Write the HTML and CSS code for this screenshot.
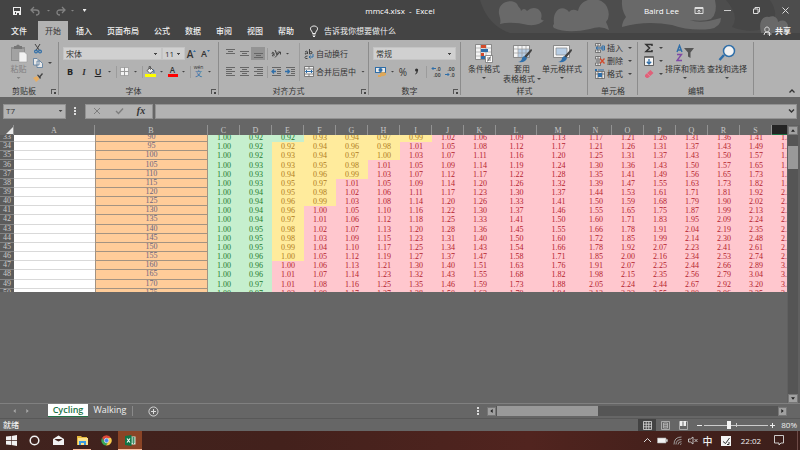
FILE: index.html
```html
<!DOCTYPE html>
<html lang="zh-CN">
<head>
<meta charset="utf-8">
<title>mmc4.xlsx - Excel</title>
<link rel="stylesheet" href="styles.css">
</head>
<body>
<header class="top">
  <svg class="clouds" width="330" height="33" viewBox="0 0 330 33" aria-hidden="true">
    <path class="haze" d="M10 0H330V33H40Q18 26 10 0Z"/>
    <path class="dark" d="M256 0H300Q312 18 296 28Q280 34 262 27Q270 16 256 0Z"/>
    <path d="M30 24C31 20 30 18 29 14C27 0 46-2 48 6Q51 9 51 11Q54 7 57 11Q62 6 68 9Q73 13 71 19Q72 21 74 20Q70 26 58 25Q42 21 30 24Z"/>
    <path d="M84 24C82 9 93 4 99 12Q102 8 108 11C111-4 132-4 137 7Q141 16 136 22Q138 26 139 30Q131 25 120 29Q98 34 84 28Q82 26 84 24Z"/>
    <path d="M152 0H245Q248 13 241 19Q234 22 220 20Q227 23 239 21Q247 19 251 18Q251 27 240 29Q219 31 202 25Q176 20 152 27Q152 22 156 17Q151 9 152 0Z"/>
    <path d="M291 32C288 22 293 15 299 17C304 15 308 18 308 22Q315 18 318 25Q317 30 319 33H291Z"/>
  </svg>
  <div class="titlebar">
    <div class="quick">
      <button class="q18" aria-label="保存"><svg width="10" height="10"><path fill="#eee" fill-rule="evenodd" d="M1 1H9V9H1ZM2 2V5H8V2ZM3 6V8H4V6ZM5 7H7V9H5Z"/></svg></button>
      <button class="q18" aria-label="撤消"><svg width="10" height="10"><path fill="none" stroke="#828282" stroke-width="1.3" d="M4 1L1 4L4 7M1 4H6Q9 4 9 6.500T6 9"/></svg></button>
      <button class="dd dim" aria-label="撤消列表"></button>
      <button class="q14" aria-label="恢复"><svg width="10" height="10"><path fill="none" stroke="#828282" stroke-width="1.3" d="M6 1L9 4L6 7M9 4H4Q1 4 1 6.500T4 9"/></svg></button>
      <button class="dd dim" aria-label="恢复列表"></button>
      <button class="q14 dd lite" aria-label="自定义快速访问工具栏"></button>
    </div>
    <div class="doc">mmc4.xlsx&nbsp; -&nbsp; Excel</div>
    <div class="win">
      <span class="user">Baird Lee</span>
      <button aria-label="功能区显示选项"><svg width="10" height="9"><path fill="none" stroke="#ddd" d="M1 1.500H9V7.500H1ZM1 2.500H9M5 7V4M3.500 5.500L5 4L6.500 5.500"/></svg></button>
      <button aria-label="最小化"><svg width="9" height="9"><path stroke="#ccc" d="M1 4.500H8"/></svg></button>
      <button aria-label="还原"><svg width="9" height="9"><path fill="none" stroke="#ddd" d="M1.500 3H6V7.500H1.500ZM3 3V1.500H7.500V6H6"/></svg></button>
      <button aria-label="关闭"><svg width="9" height="9"><path stroke="#ddd" d="M1.500 1.500L7.500 7.500M7.500 1.500L1.500 7.500"/></svg></button>
    </div>
  </div>
  <nav class="tabs">
    <button class="file">文件</button><button class="on">开始</button><button>插入</button><button>页面布局</button><button>公式</button><button>数据</button><button>审阅</button><button>视图</button><button>帮助</button>
    <button class="tell"><svg width="10" height="12"><path fill="none" stroke="#eee" d="M3.500 8.500Q3.500 7 2.500 6C0 3 2.500 1 5 1S10 3 7.500 6Q6.500 7 6.500 8.500ZM3.500 10H6.500M4 11.500H6"/></svg><span>告诉我你想要做什么</span></button>
    <button class="share"><svg width="10" height="10"><path fill="none" stroke="#ddd" d="M2 9Q2 6 5 6T7 7M5 6C2 6 2 1 5 1S8 6 5 6M7.500 6V10M5.500 8H9.500"/></svg><span>共享</span></button>
  </nav>
</header>

<main class="ribbon">
  <section class="group g-clip">
    <div class="tools">
      <button class="big paste"><svg width="18" height="19"><path fill="#8d8d8d" d="M1 3H15V17H1Z"/><path fill="#a2a2a2" d="M2 5H14V16H2Z"/><path fill="#777" d="M4 2H6Q8-1 10 2H12V5H4Z"/><path fill="#f2f2f2" stroke="#999" stroke-width=".6" d="M9 8H14.500L17 10.500V18H9Z"/></svg><span>粘贴</span><i class="arrow dim"></i></button>
      <div class="stack">
        <button aria-label="剪切"><svg width="10" height="10"><path fill="none" stroke="#444" d="M2 0L6.500 6.500M7 0L3 6.500"/><path fill="none" stroke="#2f6ea8" stroke-width="1.200" d="M3 6.200A1.400 1.400 0 1 0 3 9A1.400 1.400 0 1 0 3 6.200M7 6.200A1.400 1.400 0 1 0 7 9A1.400 1.400 0 1 0 7 6.200"/></svg></button>
        <button aria-label="复制"><svg width="10" height="10"><path fill="#e8e8e8" stroke="#55799c" stroke-width=".8" d="M.5.5H4L6 2.500V7H.5ZM4 3H7L9.500 5.500V9.500H4Z"/></svg><i class="arrow"></i></button>
        <button aria-label="格式刷"><svg width="10" height="10"><path fill="#e8ae63" d="M0 6L4 4L6.500 7L3 10Q2 8 0 6Z"/><path fill="#444" d="M4 3L5 2.500L6.500 4L9 1L10 2L7.500 5L8 6L7 7Z"/></svg></button>
      </div>
    </div>
    <footer><span>剪贴板</span><button class="launch" aria-label="剪贴板选项"></button></footer>
  </section>

  <section class="group g-font">
    <div class="tools col">
      <div class="line">
        <select class="family" aria-label="字体"><option>宋体</option></select><select class="size" aria-label="字号"><option>11</option></select>
        <button class="b13 grow" aria-label="增大字号"><span>A</span><svg width="3" height="7"><path fill="#2f6ea8" d="M0 2L1.500 0L3 2Z"/></svg></button>
        <button class="b15 shrink" aria-label="减小字号"><span>A</span><svg width="3" height="7"><path fill="#2f6ea8" d="M0 0H3L1.500 2Z"/></svg></button>
      </div>
      <div class="line">
        <button class="b14 bold">B</button><button class="b14 ital">I</button><button class="b14 under">U</button><button class="dd" aria-label="下划线"></button><i class="sep"></i>
        <button class="b13" aria-label="边框"><svg width="9" height="9"><path fill="#f3f3f3" stroke="#8a8a8a" stroke-width=".6" d="M.5.5H8.500V8.500H.5Z"/><path stroke="#999" d="M4.500 0V9M0 4.500H9"/></svg></button><button class="dd" aria-label="边框列表"></button><i class="sep"></i>
        <button class="b13" aria-label="填充颜色"><svg width="11" height="11"><path fill="#f4f4f4" stroke="#444" stroke-width=".8" d="M2 4.500L5.500 1.500L8.500 4.500L5 7.500Z"/><path fill="none" stroke="#444" stroke-width=".7" d="M4 3V.5H5.500V4"/><path fill="#2f6ea8" d="M8 3Q10 4 9.500 7H8.500Q8.500 5 8 3Z"/><path fill="#ff0" d="M0 8H11V11H0Z"/></svg></button><button class="dd" aria-label="填充颜色列表"></button>
        <button class="b13 ink" aria-label="字体颜色"><span>A</span></button><button class="dd" aria-label="字体颜色列表"></button><i class="sep"></i>
        <button class="b13 pinyin"><span>wén</span><span>文</span></button><button class="dd" aria-label="拼音列表"></button>
      </div>
    </div>
    <footer><span>字体</span><button class="launch" aria-label="字体选项"></button></footer>
  </section>

  <section class="group g-align">
    <div class="tools">
      <div class="alignset">
        <div class="line">
          <button class="b14" aria-label="顶端对齐"><svg class="bars" width="9" height="9"><path d="M0 .5H9M2 2.500H7M0 4.500H9"/></svg></button>
          <button class="b14" aria-label="垂直居中"><svg class="bars" width="9" height="9"><path d="M0 2.500H9M2 4.500H7M0 6.500H9"/></svg></button>
          <button class="b14 pressed" aria-label="底端对齐"><svg class="bars" width="9" height="9"><path d="M0 4.500H9M2 6.500H7M0 8.500H9"/></svg></button>
          <i class="sep"></i>
          <button class="b14" aria-label="方向"><svg width="11" height="9"><path fill="none" stroke="#444" d="M1 5Q1 2 3 4V7M3 5Q0 6 2 7.500M4 1L6 6Q8 4 5.500 3M4 8.500L9 3M7 3H9.500V5.500"/></svg></button><button class="dd" aria-label="方向列表"></button>
        </div>
        <div class="line">
          <button class="b14" aria-label="左对齐"><svg class="bars" width="9" height="9"><path d="M0 .5H9M0 2.500H6M0 4.500H9M0 6.500H6M0 8.500H9"/></svg></button>
          <button class="b14" aria-label="居中"><svg class="bars" width="9" height="9"><path d="M0 .5H9M2 2.500H7M0 4.500H9M2 6.500H7M0 8.500H9"/></svg></button>
          <button class="b14" aria-label="右对齐"><svg class="bars" width="9" height="9"><path d="M0 .5H9M3 2.500H9M0 4.500H9M3 6.500H9M0 8.500H9"/></svg></button>
          <i class="sep"></i>
          <button class="b14" aria-label="减少缩进量"><svg class="bars" width="10" height="9"><path d="M1 .5H10M6 2.500H10M6 4.500H10M6 6.500H10M1 8.500H10"/><path class="blue" d="M1 4.500H5M3 2.500L1 4.500L3 6.500"/></svg></button>
          <button class="b14" aria-label="增加缩进量"><svg class="bars" width="10" height="9"><path d="M1 .5H10M6 2.500H10M6 4.500H10M6 6.500H10M1 8.500H10"/><path class="blue" d="M0 4.500H4M2.500 2.500L4.500 4.500L2.500 6.500"/></svg></button>
        </div>
      </div>
      <i class="vrule"></i>
      <div class="wraps">
        <button class="line"><svg width="10" height="10"><path fill="none" stroke="#444" d="M1 3Q3 1 3.500 3V5M3.500 4Q0 4 1.500 5.500M5.500 0V5Q9 5 8 3Q7 2 5.500 3M3.500 7Q1 7 1 8.500T3.500 9.500"/><path fill="none" stroke="#2f6ea8" d="M9 5V8H5M6.500 6.500L5 8L6.500 9.500"/></svg><span>自动换行</span></button>
        <button class="line"><svg width="10" height="11"><path fill="#f5f5f5" stroke="#666" stroke-width=".8" d="M.5.5H9.500V10.500H.5ZM.5 3H9.500M.5 8H9.500M5 .5V3M5 8V10.500"/><path fill="none" stroke="#2f6ea8" d="M1.500 5.500H8.500M3 4L1.500 5.500L3 7M7 4L8.500 5.500L7 7"/></svg><span>合并后居中</span><i class="arrow"></i></button>
      </div>
    </div>
    <footer><span>对齐方式</span><button class="launch" aria-label="对齐选项"></button></footer>
  </section>

  <section class="group g-num">
    <div class="tools col">
      <div class="line"><select class="format" aria-label="数字格式"><option>常规</option></select></div>
      <div class="line">
        <button class="b15" aria-label="会计数字格式"><svg width="11" height="10"><path fill="#2f6ea8" d="M0 0H11V6H0Z"/><path fill="#e8e8e8" d="M1 1H10V5H1Z"/><path fill="#2f6ea8" d="M3.500 3A2 2 0 0 1 7.500 3A2 2 0 0 1 3.500 3"/><path fill="#dda85a" d="M5 6Q8 4 11 6V8Q8 10 5 9ZM3 8H6V10H3Z"/></svg></button><button class="dd" aria-label="货币列表"></button>
        <button class="b12 pct">%</button><button class="b15 comma" aria-label="千位分隔样式"><svg width="5" height="7"><path fill="#333" d="M1 2A1.600 1.600 0 1 1 4.200 2Q4 5 1.500 6.500L1 6Q2.500 5 2.500 3.500Q1 3.500 1 2Z"/></svg></button><i class="sep"></i>
        <button class="b14 dec" aria-label="增加小数位数"><span><svg width="5" height="5"><path d="M5 2.500H1M2.500 1L1 2.500L2.500 4"/></svg>.0</span><span>.00</span></button>
        <button class="b14 dec" aria-label="减少小数位数"><span>.00</span><span><svg width="5" height="5"><path d="M0 2.500H4M2.500 1L4 2.500L2.500 4"/></svg>.0</span></button>
      </div>
    </div>
    <footer><span>数字</span><button class="launch" aria-label="数字选项"></button></footer>
  </section>

  <section class="group g-style">
    <div class="tools">
      <button class="big w38"><svg width="18" height="19"><path fill="#f5f5f5" stroke="#777" stroke-width=".8" d="M.5.5H16.500V15.500H.5Z"/><path stroke="#a5a5a5" stroke-width=".7" d="M1 4H16M1 8H16M1 12H16M5.500 1V15M11 1V15"/><path fill="#d24a2b" d="M6 1H11V4H6ZM6 9H9V12H6Z"/><path fill="#2f6ea8" d="M6 5H13V8H6ZM6 12H10V15H6Z"/><path fill="#fff" stroke="#777" stroke-width=".8" d="M10.500 11.500H17.500V18.500H10.500Z"/><path stroke="#444" d="M12 14H16M12 16H16M15.500 12.500L12.500 17.500" stroke-width=".7"/></svg><span>条件格式</span><i class="arrow"></i></button>
      <button class="big w38"><svg width="19" height="19"><path fill="#f5f5f5" stroke="#777" stroke-width=".8" d="M.5 1.500H16.500V13.500H.5Z"/><path fill="#b7cde4" d="M5 5H16V13H5Z"/><path stroke="#999" stroke-width=".7" d="M1 5H16M1 9H16M5 2V13M9 2V13M13 2V13"/><path fill="#444" d="M18 5Q20 6 18 8L13 14L11 12.500Z"/><path fill="#2f6ea8" d="M11 12L14 14Q13 19 5 18Q9 17 9 14Z"/></svg><span>套用</span><span>表格格式<i class="arrow"></i></span></button>
      <button class="big w42"><svg width="19" height="19"><path fill="#f5f5f5" stroke="#777" stroke-width=".8" d="M.5 1.500H16.500V13.500H.5Z"/><path fill="#b7cde4" stroke="#888" stroke-width=".7" d="M3 4H14V11H3Z"/><path fill="#444" d="M18 5Q20 6 18 8L13 14L11 12.500Z"/><path fill="#2f6ea8" d="M11 12L14 14Q13 19 5 18Q9 17 9 14Z"/></svg><span>单元格样式</span><i class="arrow"></i></button>
    </div>
    <footer><span>样式</span></footer>
  </section>

  <section class="group g-cells">
    <div class="tools stack wide">
      <button><svg width="10" height="10"><path fill="#e6e6e6" stroke="#555" stroke-width=".7" d="M.5.5H5.500V3H.5ZM.5 7H5.500V9.500H.5ZM3 .5V3M3 7V9.500"/><path fill="none" stroke="#2f6ea8" d="M1 5H10M3 3.500L1 5L3 6.500M7 3H9.500V7H7Z"/></svg><span>插入</span><i class="arrow"></i></button>
      <button><svg width="10" height="10"><path fill="#e6e6e6" stroke="#555" stroke-width=".7" d="M.5.5H5.500V3H.5ZM.5 7H5.500V9.500H.5ZM3 .5V3M3 7V9.500M1 5H5"/><path stroke="#d24a2b" stroke-width="1.300" d="M5 2.500L9.500 7.500M9.500 2.500L5 7.500"/></svg><span>删除</span><i class="arrow"></i></button>
      <button><svg width="10" height="10"><path fill="#e6e6e6" stroke="#555" stroke-width=".7" d="M.5 2.500H9.500V9.500H.5ZM3 2.500V9.500M7 2.500V9.500M.5 5H9.500"/><path fill="#2f6ea8" d="M3 4H7V8H3ZM0 0H2V2H0ZM3 .5H9V1.500H3Z"/></svg><span>格式</span><i class="arrow"></i></button>
    </div>
    <footer><span>单元格</span></footer>
  </section>

  <section class="group g-edit">
    <div class="tools">
      <div class="stack wide">
        <button aria-label="自动求和"><svg width="10" height="10"><path fill="none" stroke="#333" stroke-width="1.500" d="M8 3V1.500H2L5.500 5L2 8.500H8V7"/></svg><i class="arrow"></i></button>
        <button aria-label="填充"><svg width="10" height="10"><path fill="#f4f4f4" stroke="#444" stroke-width=".8" d="M.5.5H9.500V9.500H.5Z"/><path fill="#777" d="M1 1H9V2H1Z"/><path fill="none" stroke="#2f6ea8" stroke-width="1.300" d="M5 3V8M2.800 5.800L5 8L7.200 5.800"/></svg><i class="arrow"></i></button>
        <button aria-label="清除"><svg width="10" height="10"><path fill="#df6179" d="M1 6L6.500 1L9.500 4L4 9H2.500L1 7.500Z"/><path stroke="#f0a0b0" stroke-width=".6" d="M3 4.200L6 7.200"/></svg><i class="arrow"></i></button>
      </div>
      <button class="big w42"><svg width="18" height="19"><path fill="none" stroke="#2f6ea8" stroke-width="1.400" d="M1 8L3.500 1.500L6 8M2 6H5"/><path fill="none" stroke="#7f4aa5" stroke-width="1.400" d="M1 10.500H5.500L1 16.500H6"/><path fill="#555" d="M8 4H18L14.500 8.500V14L12 12.500V8.500Z"/></svg><span>排序和筛选</span><i class="arrow"></i></button>
      <button class="big w42"><svg width="18" height="19"><path stroke="#2f6ea8" stroke-width="2.500" d="M1.500 16L6 11"/><circle cx="11" cy="7" r="5.500" fill="#f2f2f2" stroke="#2f6ea8" stroke-width="1.500"/></svg><span>查找和选择</span><i class="arrow"></i></button>
    </div>
    <footer><span>编辑</span></footer>
  </section>
  <button class="collapse" aria-label="折叠功能区"><svg width="8" height="6"><path fill="none" stroke="#333" stroke-width="1.300" d="M1.500 4.500L4 2L6.500 4.500"/></svg></button>
</main>

<div class="formula">
  <div class="namebox"><input aria-label="名称框" value="T7"><button class="dd" aria-label="名称列表"></button></div>
  <i class="dots"></i>
  <div class="fx">
    <button aria-label="取消"><svg width="8" height="8"><path stroke="#7d7d7d" d="M1 1L7 7M7 1L1 7"/></svg></button>
    <button aria-label="输入"><svg width="9" height="8"><path fill="none" stroke="#7d7d7d" stroke-width="1.400" d="M1 4L3.500 6.500L8 1.500"/></svg></button>
    <button class="fn">fx</button>
  </div>
  <div class="entry"><input aria-label="编辑栏"><button aria-label="展开编辑栏"><svg width="7" height="6"><path fill="none" stroke="#333" stroke-width="1.400" d="M1 1.500L3.500 4L6 1.500"/></svg></button></div>
</div>

<div class="work">
  <div class="sheet">
    <table class="grid heads"><colgroup></colgroup><thead><tr></tr></thead></table>
    <div class="pane"><table class="grid cells"><colgroup></colgroup><tbody></tbody></table></div>
  </div>
  <div class="vscroll"><button aria-label="向上"><i class="tri up"></i></button><div class="track"><div class="thumb"></div></div><button aria-label="向下"><i class="tri down"></i></button></div>
</div>

<div class="sheetbar">
  <button class="nav" aria-label="上一张"><i class="tri left"></i></button><button class="nav" aria-label="下一张"><i class="tri right"></i></button>
  <button class="stab on">Cycling</button><button class="stab">Walking</button><i class="tabend"></i>
  <button class="add" aria-label="新工作表"><svg width="11" height="11"><path fill="none" stroke="#ddd" d="M5.500 1A4.500 4.500 0 1 1 5.400 1M5.500 3V8M3 5.500H8"/></svg></button>
  <i class="dots"></i>
  <div class="hscroll"><button aria-label="向左"><i class="tri left"></i></button><div class="htrack"><div class="hthumb"></div></div><button aria-label="向右"><i class="tri right"></i></button></div>
</div>

<div class="status">
  <span class="ready">就绪</span>
  <button class="on" aria-label="普通"><svg width="9" height="9"><path fill="none" stroke="#ddd" stroke-width=".8" d="M.5.5H8.500V8.500H.5ZM3.200.5V8.500M5.800.5V8.500M.5 3.200H8.500M.5 5.800H8.500"/></svg></button>
  <button aria-label="页面布局"><svg width="9" height="9"><path fill="none" stroke="#bbb" stroke-width=".8" d="M.5.5H8.500V8.500H.5ZM2.500 2H6.500V7H2.500ZM2.500 3.700H6.500M2.500 5.300H6.500"/></svg></button>
  <button aria-label="分页预览"><svg width="9" height="9"><path fill="none" stroke="#bbb" stroke-width=".8" d="M.5.5H8.500V8.500H.5Z"/><path fill="#eee" d="M1 0H3.500V5H1ZM4.500 0H7V5H4.500Z"/></svg></button>
  <div class="zoom"><button aria-label="缩小"><svg width="5" height="5"><path stroke="#eee" d="M0 2.500H5"/></svg></button><input type="range" min="10" max="190" value="80" aria-label="缩放"><button aria-label="放大"><svg width="5" height="5"><path stroke="#eee" d="M0 2.500H5M2.500 0V5"/></svg></button></div>
  <span class="pctv">80%</span>
</div>

<div class="taskbar">
  <button aria-label="开始菜单"><svg width="11" height="11"><path fill="#f2f2f2" d="M0 1.500L5 1V5H0ZM5.600.9L11 0V5H5.600ZM0 5.700H5V10L0 9.400ZM5.600 5.700H11V11L5.600 10.100Z"/></svg></button>
  <button aria-label="Cortana"><svg width="11" height="11"><circle cx="5.500" cy="5.500" r="4.300" fill="none" stroke="#f2f2f2" stroke-width="1.500"/></svg></button>
  <button aria-label="邮件"><svg width="11" height="11"><path fill="#f2f2f2" fill-rule="evenodd" d="M0 4L5.500.5L11 4V10H0ZM1.500 4.500L5.500 6.500L9.500 4.500L8 4H3Z"/></svg></button>
  <button class="open" aria-label="文件资源管理器"><svg width="11" height="11"><path fill="#e5b83d" d="M0 1H4L5 2H10V10H0Z"/><path fill="#fce28c" d="M1 3H11V10H1Z"/><path fill="#3b9be0" fill-rule="evenodd" d="M2 6H9V10H7V8H4V10H2Z"/></svg></button>
  <button aria-label="Chrome"><svg width="11" height="11"><path fill="#e04a3a" d="M1 3A5 5 0 0 1 10 3H5.500L3.500 6.500Z"/><path fill="#3aa757" d="M1 3A5 5 0 0 0 5 10.500L7.500 7L3.500 6.500Z"/><path fill="#f7cb4d" d="M10 3A5 5 0 0 1 5 10.500L7.500 6.500L7 3Z"/><circle cx="5.500" cy="5.500" r="2.200" fill="#4285f4" stroke="#f4f4f4" stroke-width=".7"/></svg></button>
  <button class="open live" aria-label="Excel"><svg width="11" height="11"><path fill="#d7ebdf" d="M5 1.500H10.500V9.500H5Z"/><path stroke="#2c8256" d="M6 3H10M6 5H10M6 7H10M8.500 2V9" stroke-width=".8"/><path fill="#107545" d="M0 1L6.500 0V11L0 10Z"/><path stroke="#fff" stroke-width="1.100" d="M2 3.500L5 7.500M5 3.500L2 7.500"/></svg></button>
  <div class="tray">
    <button aria-label="隐藏的图标"><svg width="9" height="9"><path fill="none" stroke="#ddd" d="M1 6L4.500 2.500L8 6"/></svg></button>
    <button aria-label="电池"><svg width="11" height="9"><path fill="#f2f2f2" stroke="#aaa" stroke-width=".6" d="M.5 2H9V7H.5ZM9 3.500H10.500V5.500H9Z"/></svg></button>
    <button aria-label="网络"><svg width="9" height="9"><path fill="none" stroke="#aaa" stroke-width=".9" d="M1 8.500Q1 1 8.500 1M3 8.500Q3 3.500 8.500 3.500M5 8.500Q5 5.700 8.500 5.700M7 8.500L8.500 7.700"/></svg></button>
    <button aria-label="静音"><svg width="10" height="9"><path fill="none" stroke="#ccc" stroke-width=".9" d="M.5 3H2.500L5 1V8L2.500 6H.5ZM6.500 3L9.500 6M9.500 3L6.500 6"/></svg></button>
    <button class="ime">中</button>
    <button class="wide" aria-label="手写板"><svg width="10" height="10"><path fill="#f4f4f4" d="M0 0H10V10H0Z"/><path fill="none" stroke="#333" d="M2 5.500L4.500 7.500L8.500 2M6 8.500H8V6"/></svg></button>
    <time>22:02</time>
    <button class="note" aria-label="操作中心"><svg width="10" height="11"><path fill="none" stroke="#ddd" stroke-width=".9" d="M.5.5H9.500V8H7L5 10L5 8H.5Z"/></svg></button>
  </div>
</div>
<script src="sheet.js"></script>
</body>
</html>
```
FILE: styles.css
```css
* { box-sizing: border-box; }
html, body { height: 100%; }
body {
  margin: 0;
  display: flex;
  flex-direction: column;
  overflow: hidden;
  background: #666;
  color: #333;
  font: 8px/10px "Open Sans", "Noto Sans CJK SC", sans-serif;
}
button, input, select { font: inherit; color: inherit; margin: 0; padding: 0; border: 0; background: none; border-radius: 0; }
input { min-width: 0; outline: 0; }
button { display: flex; align-items: center; justify-content: center; flex: none; white-space: nowrap; }
svg { display: block; flex: none; }

/* small drop-down arrows */
.arrow, .dd::before { content: ""; display: block; flex: none; width: 4px; height: 2px; background: #444; clip-path: polygon(0 0, 100% 0, 50% 100%); }
.dd { width: 9px; }
.dim.arrow, .dim::before { background: #858585; }
.lite::before { background: #eee; height: 3px; }

/* title bar and ribbon tabs */
.top { position: relative; background: #444; color: #f0f0f0; }
.clouds { position: absolute; top: 0; right: 0; fill: #696969; }
.clouds .haze { fill: #4d4d4d; }
.clouds .dark { fill: #464646; }
.titlebar { position: relative; display: grid; grid-template-columns: 1fr auto 1fr; align-items: center; height: 21px; }
.quick { display: flex; padding-left: 8px; }
.quick button { height: 18px; }
.q18 { width: 18px; }
.q14 { width: 15px; }
.doc { white-space: nowrap; }
.win { display: flex; align-items: center; justify-content: flex-end; }
.win button { width: 29px; height: 20px; }
.user { padding-right: 5px; }
.doc, .user { color: #fff; }
.tabs { position: relative; display: flex; gap: 1px; height: 19px; }
.tabs button { padding: 0 7px; font-weight: 500; }
.tabs .file { padding: 0 11px; margin-right: -1px; }
.tabs .on { background: #b2b2b2; color: #333; font-weight: 400; }
.tabs .tell { gap: 5px; font-weight: 400; }
.tabs .share { gap: 3px; margin-left: auto; padding-right: 9px; font-weight: 700; }

/* ribbon */
.ribbon { display: flex; height: 57px; background: #b2b2b2; flex: none; }
.group { display: flex; flex-direction: column; flex: none; position: relative; }
.group::after { content: ""; position: absolute; right: 0; top: 2px; bottom: 2px; width: 1px; background: #8c8c8c; }
.g-clip { width: 59px; }
.g-font { width: 160px; }
.g-align { width: 150px; }
.g-num { width: 92px; }
.g-style { width: 127px; }
.g-cells { width: 50px; }
.g-edit { width: 116px; }
.tools { display: flex; flex: 1; padding: 0 4px; }
.tools.col { flex-direction: column; gap: 5px; padding-top: 7px; }
.group footer { display: flex; height: 12px; align-items: center; }
.group footer span { flex: 1; text-align: center; }
.launch { width: 11px; height: 5px; }
.launch::before { content: ""; width: 4px; height: 4px; border: solid #555; border-width: 1px 0 0 1px; background: linear-gradient(#444, #444) right bottom / 2px 2px no-repeat; }
.line { display: flex; height: 13px; align-items: center; }
.line button { height: 13px; }
.b12 { width: 12px; }
.b13 { width: 13px; }
.b14 { width: 14px; }
.b15 { width: 15px; }
.sep { width: 1px; height: 12px; margin: 0 1px 0 2px; background: #9c9c9c; flex: none; }

.big { flex-direction: column; justify-content: flex-start; padding-top: 4px; }
.big > svg { margin-bottom: 1px; }
.big > .arrow { margin-top: 3px; }
.big span { display: flex; align-items: center; gap: 2px; }
.w38 { width: 38px; }
.w42 { width: 42px; }
.paste { width: 29px; color: #808080; }
.stack { display: flex; flex-direction: column; gap: 4px; padding-top: 4px; }
.stack button { height: 10px; gap: 5px; justify-content: flex-start; }
.stack.wide { gap: 3px; padding-top: 3px; }
.stack.wide button { gap: 2px; height: 10px; }
.g-cells .tools { padding-left: 7px; }
.g-cells .arrow { margin-left: 3px; }
.g-edit .tools { padding-left: 0; }
.g-edit .stack { width: 26px; padding-left: 6px; }
.g-edit .stack .arrow { margin-left: 3px; }

select { appearance: none; height: 13px; padding-left: 2px; border: 1px solid #c4c4c4; background: linear-gradient(to bottom right, #444 50%, transparent 50%) right 3px center / 2px 2px no-repeat, linear-gradient(to bottom left, #444 50%, transparent 50%) right 5px center / 2px 2px no-repeat, #d0d0d0; }
.family { width: 99px; }
.size { width: 23px; }
.format { width: 83px; }
.grow { font-size: 10px; font-weight: 600; }
.shrink { font-size: 9px; font-weight: 600; }
.bold { font-weight: 700; }
.ital { font: italic 700 9px/10px "Liberation Serif", serif; }
.under { font-weight: 600; text-decoration: underline; }
.bold, .under { font-size: 9px; color: #222; }
.ink span { width: 10px; height: 11px; border-bottom: 3px solid #f00; font-weight: 600; line-height: 8px; }
.pinyin { flex-direction: column; font-size: 5px; line-height: 5px; }
.pinyin span + span { color: #2f6ea8; font-size: 7px; line-height: 8px; }
.pressed { background: #949494; }
.bars { fill: none; stroke: #666; }
.bars .blue { stroke: #2f6ea8; stroke-width: 1.300; }
.alignset { display: flex; flex-direction: column; gap: 5px; width: 76px; padding-top: 7px; }
.vrule { width: 1px; height: 38px; margin-top: 3px; background: #9c9c9c; }
.wraps { display: flex; flex-direction: column; gap: 5px; padding: 7px 0 0 4px; }
.wraps button { gap: 2px; justify-content: flex-start; }
.wraps .arrow { margin-left: 3px; }
.pct { font-size: 10px; }
.dec { flex-direction: column; font-size: 5px; line-height: 6px; font-weight: 600; }
.dec span { display: flex; width: 11px; align-items: center; justify-content: flex-end; }
.dec svg { fill: none; stroke: #2f6ea8; }
.collapse { margin: auto 3px 3px auto; width: 10px; }

/* formula bar */
.formula { display: flex; align-items: center; height: 28px; padding: 0 3px; flex: none; }
.formula > div { display: flex; height: 15px; background: #b2b2b2; border: 1px solid #929292; }
.namebox { width: 63px; }
.namebox input { flex: 1; padding-left: 2px; }
.dots { width: 2px; height: 8px; margin: 0 9px 0 8px; background: repeating-linear-gradient(#ddd 0 2px, transparent 2px 3px); }
.fx { width: 68px; margin-right: 2px; }
.fx button { flex: 1; }
.fn { font: italic 700 10px/12px "Liberation Serif", serif; }
.entry { flex: 1; }
.entry input { flex: 1; }
.entry button { width: 10px; }

/* worksheet */
.work { display: flex; flex: 1; min-height: 0; }
.sheet { flex: 1; min-width: 0; overflow: hidden; }
.grid { border-collapse: separate; border-spacing: 0; table-layout: fixed; width: 804px; font: 8px/8px "Liberation Serif", serif; text-align: center; }
.grid th, .grid td { padding: 1px 0 0; font-weight: 400; }
.w-row { width: 14px; }
.w-a { width: 81px; }
.w-b { width: 113px; }
.w-n { width: 32px; }
.w-l { width: 41px; }
.w-m { width: 43px; }
.heads th { height: 10px; color: #c8c8c8; border-right: 1px solid #929292; }
.heads th.corner::before { content: ""; display: block; width: 7px; height: 7px; margin-left: 6px; background: #e8e8e8; clip-path: polygon(100% 0, 100% 100%, 0 100%); }
.heads th.cur { background: #242424; border-bottom: 1px solid #1e7145; border-right: 0; }
.pane { height: 157px; overflow: hidden; }
.cells { height: 165px; margin-top: -2px; }
.grid.cells th, .grid.cells .a, .grid.cells .b { padding: 0; }
.cells th { background: #5c5c5c; color: #c8c8c8; border-bottom: 1px solid #858585; }
.cells .a { background: #fff; border-bottom: 1px solid #d9d9d9; }
.cells .b { background: #ffcc99; color: #6b6480; border: solid #a39382; border-width: 0 1px 1px; }
.cells .good { background: #c6efce; color: #237a2d; }
.cells .mid { background: #ffeb9c; color: #b07c1c; }
.cells .bad { background: #ffc7ce; color: #b5222d; }

.tri { display: block; width: 4px; height: 4px; background: #222; }
.up { clip-path: polygon(0 80%, 50% 20%, 100% 80%); }
.down { clip-path: polygon(0 20%, 50% 80%, 100% 20%); }
.left { clip-path: polygon(80% 0, 20% 50%, 80% 100%); }
.right { clip-path: polygon(20% 0, 80% 50%, 20% 100%); }
.vscroll { display: flex; flex-direction: column; width: 13px; padding: 1px 2px 0 1px; background: #606060; }
.vscroll button, .hscroll button { width: 9px; height: 9px; background: #a0a0a0; border: 1px solid #777; }
.vscroll button { width: 10px; }
.track { flex: 1; padding-top: 11px; background: #555; }
.thumb { height: 23px; background: #999; }

/* sheet tabs */
.sheetbar { display: flex; height: 15px; flex: none; border-top: 1px solid #808080; }
.sheetbar .nav { width: 13px; }
.sheetbar .nav:first-child { margin-left: 8px; }
.nav .tri { background: #aaa; }
.stab { height: 13px; min-width: 44px; font-size: 9px; font-weight: 400; line-height: 11px; color: #eee; align-items: flex-start; }
.stab.on { min-width: 40px; margin-left: 14px; background: #fff; color: #217346; border-bottom: 1px solid #217346; font-weight: 600; }
.tabend { width: 1px; height: 10px; margin: 2px 14px 0 0; background: #8a8a8a; }
.add { width: 12px; }
.sheetbar .dots { margin: 3px 8px 0 auto; }
.hscroll { display: flex; align-items: center; width: 38%; max-width: 300px; min-width: 300px; margin-right: 13px; }
.htrack { flex: 1; height: 10px; padding-left: 1px; background: #555; }
.hthumb { width: 36%; height: 10px; background: #999; }

/* status bar */
.status { display: flex; align-items: center; height: 13px; flex: none; border-top: 1px solid #585858; color: #eee; }
.ready { flex: 1; padding-left: 3px; font-weight: 500; }
.status > button { width: 18px; height: 12px; }
.status > .on { background: #434343; }
.zoom { display: flex; align-items: center; gap: 1px; margin-left: 4px; }
.zoom button { width: 7px; height: 10px; }
.zoom input { appearance: none; width: 64px; height: 10px; background: linear-gradient(#ccc, #ccc) center / 100% 1px no-repeat, linear-gradient(#ccc, #ccc) center / 1px 4px no-repeat; }
.zoom input::-webkit-slider-thumb { appearance: none; width: 4px; height: 8px; background: #f4f4f4; }
.pctv { width: 24px; padding-right: 3px; text-align: right; }

/* taskbar */
.taskbar { display: flex; height: 19px; flex: none; background: linear-gradient(90deg, #40231e, #43211c 35%, #51241f 66%, #43201b 85%, #3c1f1b); color: #f0f0f0; }
.taskbar > button { width: 24px; }
.taskbar > button:first-child { width: 22px; }
.open { position: relative; }
.open::after { content: ""; position: absolute; left: 3px; right: 3px; bottom: 0; height: 1px; background: #f5bd9f; }
.live { background: #8a4426; }
.live::after { left: 0; right: 0; }
.tray { display: flex; align-items: center; margin-left: auto; padding-right: 2px; border-right: 1px solid #6d4a46; margin-right: 2px; }
.tray button { width: 15px; height: 19px; }
.tray .ime { font-size: 10px; font-weight: 500; }
.tray .wide { width: 21px; margin-right: 3px; }
.tray time { font-size: 8px; min-width: 24px; text-align: center; }
.tray .note { width: 32px; }
```
FILE: sheet.js
```js
const letters = ["A", "B", "C", "D", "E", "F", "G", "H", "I", "J", "K", "L", "M", "N", "O", "P", "Q", "R", "S", ""];
const widths = ["row", "a", "b", ...Array(9).fill("n"), "l", "m", ...Array(7).fill("n")];

// One line per sheet row, columns C to T.
const rows = `
1.00 0.92 0.92 0.93 0.94 0.97 0.99 1.02 1.06 1.09 1.13 1.17 1.21 1.26 1.31 1.36 1.41 1.47
1.00 0.92 0.92 0.94 0.96 0.98 1.01 1.05 1.08 1.12 1.17 1.21 1.26 1.31 1.37 1.43 1.49 1.55
1.00 0.92 0.93 0.94 0.97 1.00 1.03 1.07 1.11 1.16 1.20 1.25 1.31 1.37 1.43 1.50 1.57 1.64
1.00 0.93 0.93 0.95 0.98 1.01 1.05 1.09 1.14 1.19 1.24 1.30 1.36 1.43 1.50 1.57 1.65 1.72
1.00 0.93 0.94 0.96 0.99 1.03 1.07 1.12 1.17 1.22 1.28 1.35 1.41 1.49 1.56 1.65 1.73 1.82
1.00 0.93 0.95 0.97 1.01 1.05 1.09 1.14 1.20 1.26 1.32 1.39 1.47 1.55 1.63 1.73 1.82 1.92
1.00 0.94 0.95 0.98 1.02 1.06 1.11 1.17 1.23 1.30 1.37 1.44 1.53 1.61 1.71 1.81 1.92 2.04
1.00 0.94 0.96 0.99 1.03 1.08 1.14 1.20 1.26 1.33 1.41 1.50 1.59 1.68 1.79 1.90 2.02 2.14
1.00 0.94 0.96 1.00 1.05 1.10 1.16 1.22 1.30 1.37 1.46 1.55 1.65 1.75 1.87 1.99 2.13 2.27
1.00 0.94 0.97 1.01 1.06 1.12 1.18 1.25 1.33 1.41 1.50 1.60 1.71 1.83 1.95 2.09 2.24 2.40
1.00 0.95 0.98 1.02 1.07 1.13 1.20 1.28 1.36 1.45 1.55 1.66 1.78 1.91 2.04 2.19 2.35 2.52
1.00 0.95 0.98 1.03 1.09 1.15 1.23 1.31 1.40 1.50 1.60 1.72 1.85 1.99 2.14 2.30 2.48 2.67
1.00 0.95 0.99 1.04 1.10 1.17 1.25 1.34 1.43 1.54 1.66 1.78 1.92 2.07 2.23 2.41 2.61 2.82
1.00 0.96 1.00 1.05 1.12 1.19 1.27 1.37 1.47 1.58 1.71 1.85 2.00 2.16 2.34 2.53 2.74 2.97
1.00 0.96 1.00 1.06 1.13 1.21 1.30 1.40 1.51 1.63 1.76 1.91 2.07 2.25 2.44 2.66 2.89 3.14
1.00 0.96 1.01 1.07 1.14 1.23 1.32 1.43 1.55 1.68 1.82 1.98 2.15 2.35 2.56 2.79 3.04 3.31
1.00 0.97 1.01 1.08 1.16 1.25 1.35 1.46 1.59 1.73 1.88 2.05 2.24 2.44 2.67 2.92 3.20 3.49
1.00 0.97 1.02 1.09 1.17 1.27 1.38 1.50 1.63 1.79 1.94 2.12 2.32 2.55 2.80 3.06 3.35 3.68
`.trim().split("\n").map(line => line.split(" "));

// Last row of the yellow band in columns E to I.
const yellowEnd = { 2: 46, 3: 40, 4: 37, 5: 35, 6: 33 };

function band(col, row) {
  if (col < 2 || (col === 2 && row === 33)) return "good";
  return row <= (yellowEnd[col] || 0) ? "mid" : "bad";
}

document.querySelectorAll("colgroup").forEach(group => {
  group.innerHTML = widths.map(w => `<col class="w-${w}">`).join("");
});
document.querySelector(".heads tr").innerHTML = '<th class="corner"></th>' +
  letters.map(l => l ? `<th>${l}</th>` : '<th class="cur"></th>').join("");
document.querySelector(".cells tbody").innerHTML = rows.map((values, i) => {
  const row = 33 + i;
  const cells = values.map((v, c) => `<td class="${band(c, row)}">${v}</td>`).join("");
  return `<tr><th>${row}</th><td class="a"></td><td class="b">${90 + 5 * i}</td>${cells}</tr>`;
}).join("");
```
